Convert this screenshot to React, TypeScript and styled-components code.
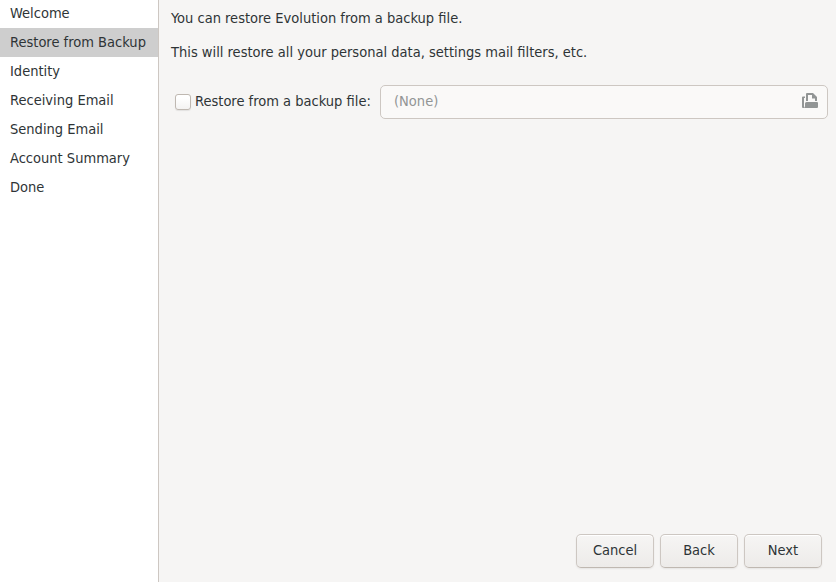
import React from "react";
import styled, { createGlobalStyle } from "styled-components";

const GlobalStyle = createGlobalStyle`
  * { box-sizing: border-box; }
  body { margin: 0; }
`;

const Window = styled.div`
  display: flex;
  width: 836px;
  height: 582px;
  overflow: hidden;
  background: #f6f5f4;
  color: #2e3436;
  font: 14.53px/20px "DejaVu Sans Condensed", "DejaVu Sans", sans-serif;
  font-stretch: condensed;
`;

const Sidebar = styled.nav`
  flex: 0 0 159px;
  background: #fff;
  border-right: 1px solid #cdc7c2;
  overflow: hidden;
`;

const Step = styled.div<{ $current?: boolean }>`
  height: 29px;
  padding-left: 10px;
  line-height: 28px;
  white-space: nowrap;
  background: ${(p) => (p.$current ? "#cecece" : "transparent")};
  &:first-child { margin-top: -1px; }
`;

const Main = styled.main`
  flex: 1;
  display: flex;
  flex-direction: column;
  padding: 8px 8px 14px 12px;
`;

const Intro = styled.p`
  margin: 0 0 14px;
  white-space: nowrap;
`;

const FileRow = styled.div`
  display: flex;
  align-items: center;
  height: 34px;
  margin-top: 9px;
`;

const CheckLabel = styled.label`
  display: flex;
  align-items: center;
  width: 209px;
  padding-left: 4px;
  white-space: nowrap;
`;

const CheckBox = styled.span`
  width: 16px;
  height: 16px;
  margin-right: 4px;
  border: 1px solid #bfb8b1;
  border-radius: 3px;
  background: linear-gradient(#fff 20%, #f4f3f2);
  box-shadow: 0 1px 1px rgba(0, 0, 0, 0.08);
`;

const Caption = styled.span`
  margin-top: -2px;
`;

const FileEntry = styled.div`
  flex: 1;
  display: flex;
  align-items: center;
  justify-content: space-between;
  height: 34px;
  padding: 0 9px 0 13px;
  border: 1px solid #cdc7c2;
  border-radius: 5px;
  background: #faf9f8;
  color: #929595;
`;

const OpenIcon = styled.svg`
  width: 16px;
  height: 16px;
  margin-top: -2px;
`;

const Actions = styled.div`
  display: flex;
  justify-content: flex-end;
  gap: 6px;
  margin: auto 6px 0 0;
`;

const Button = styled.button`
  width: 78px;
  height: 34px;
  padding: 0 0 2px;
  border: 1px solid #cdc7c2;
  border-bottom-color: #bfb8b1;
  border-radius: 5px;
  background: linear-gradient(#f6f5f4, #edebe9);
  box-shadow: inset 0 1px #fff, 0 1px 2px rgba(0, 0, 0, 0.07);
  color: inherit;
  font: inherit;
`;

const steps = ["Welcome", "Restore from Backup", "Identity", "Receiving Email", "Sending Email", "Account Summary", "Done"];

export default function App() {
  return (
    <Window>
      <GlobalStyle />
      <Sidebar>
        {steps.map((s, i) => <Step key={s} $current={i === 1}>{s}</Step>)}
      </Sidebar>
      <Main>
        <Intro>You can restore Evolution from a backup file.</Intro>
        <Intro>This will restore all your personal data, settings mail filters, etc.</Intro>
        <FileRow>
          <CheckLabel>
            <CheckBox />
            <Caption>Restore from a backup file:</Caption>
          </CheckLabel>
          <FileEntry>
            <Caption>(None)</Caption>
            <OpenIcon viewBox="0 0 16 16" fill="#929595">
              <path d="M1 3.500h2V5H2v10H1q-1 0-1-1V4.500q0-1 1-1z" />
              <path fillRule="evenodd" d="M5 0h6l4 4v4h-2V5.500h-3V2H6v6H4V1q0-1 1-1z" />
              <path d="M4.500 9H15q1 0 1 1v4q0 1-1 1H1q2 0 2-2v-2.500Q3 9 4.500 9z" />
            </OpenIcon>
          </FileEntry>
        </FileRow>
        <Actions>
          <Button>Cancel</Button>
          <Button>Back</Button>
          <Button>Next</Button>
        </Actions>
      </Main>
    </Window>
  );
}
